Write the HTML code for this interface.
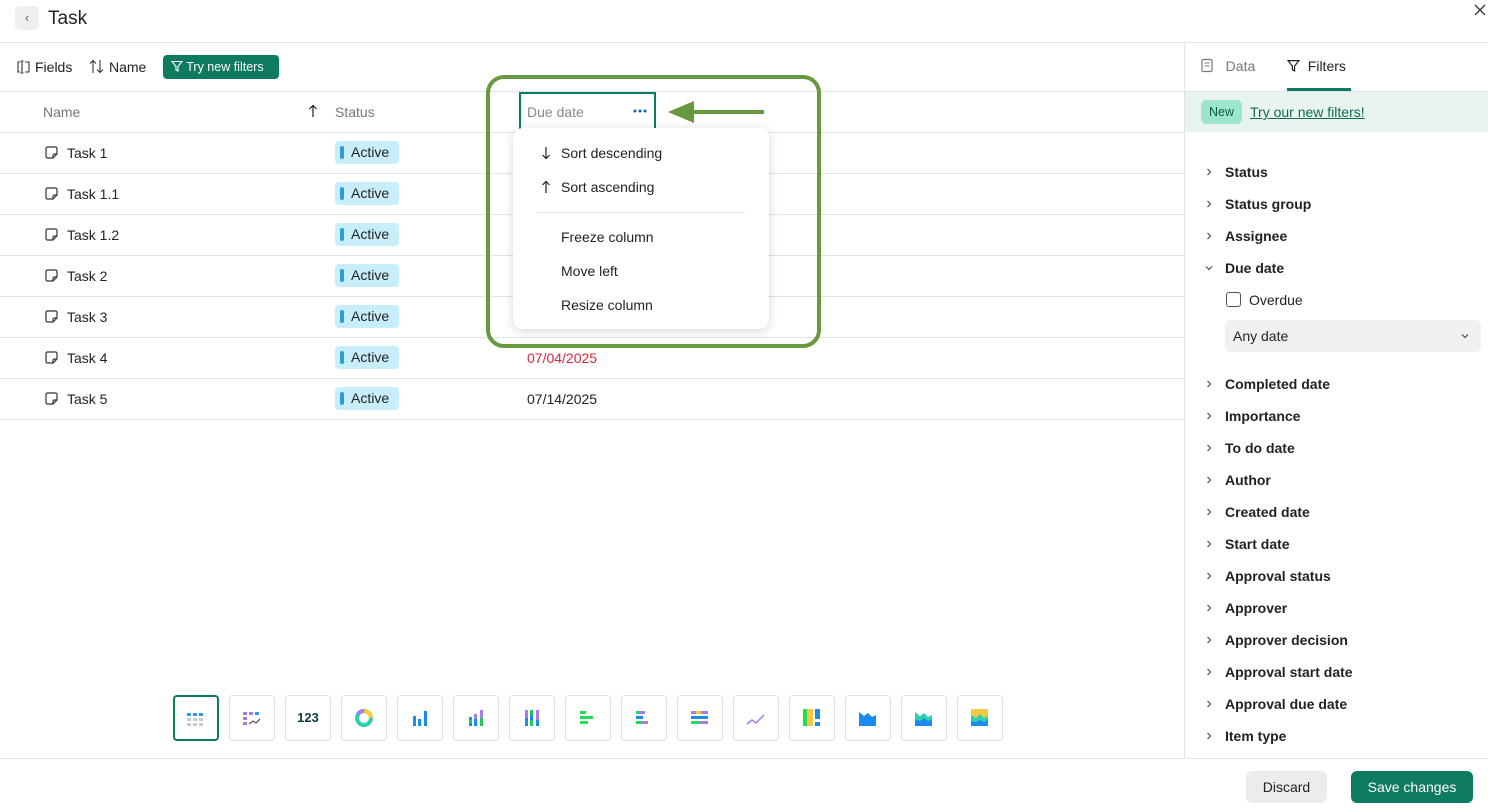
<!DOCTYPE html>
<html><head><style>
*{box-sizing:border-box;margin:0;padding:0}
body{width:1488px;height:808px;position:relative;overflow:hidden;background:#fff;font-family:"Liberation Sans",sans-serif;color:#222;font-size:14px}
.a{position:absolute}
.hl{position:absolute;height:1px;background:#e3e3e3}
.badge{position:absolute;left:335px;width:64px;height:23px;background:#c8eefb;border-radius:4px;font-size:14px;line-height:23px;padding-left:16px}
.badge:before{content:"";position:absolute;left:5px;top:5px;width:4px;height:13px;border-radius:2px;background:#2e9bd9}
.tk{position:absolute;left:67px;font-size:14px}
.ti{position:absolute;left:45px}
.fi{position:absolute;left:1225px;font-weight:bold;font-size:14px}
.ch{position:absolute;left:1205px}
.cb{position:absolute;top:695px;width:46px;height:46px;border:1px solid #ddd;border-radius:4px;background:#fff}
.mi{position:absolute;left:561px;font-size:14px}
</style></head><body>
<svg width="0" height="0" style="position:absolute"><defs>
<symbol id="note" viewBox="0 0 13 13"><path d="M2.5 1h8a1.5 1.5 0 0 1 1.5 1.5V8l-4 4H2.5A1.5 1.5 0 0 1 1 10.5v-8A1.5 1.5 0 0 1 2.5 1z M12 8H9.5A1.5 1.5 0 0 0 8 9.5V12" fill="none" stroke="#333" stroke-width="1.2"/></symbol>
<symbol id="chev" viewBox="0 0 8 8"><path d="M2.5 1l3 3-3 3" fill="none" stroke="#444" stroke-width="1.1"/></symbol>
<symbol id="up" viewBox="0 0 10 14"><path d="M5 13V1.5M1.5 5L5 1.5 8.5 5" fill="none" stroke="#222" stroke-width="1.2"/></symbol>
</defs></svg>
<!-- header -->
<div class="a" style="left:15px;top:6px;width:24px;height:24px;background:#efefef;border-radius:5px;text-align:center;line-height:23px;color:#666;font-size:13px">‹</div>
<div class="a" style="left:48px;top:8px;font-size:19px">Task</div>
<svg class="a" style="left:1474px;top:4px" width="12" height="12"><path d="M1 1l10 10M11 1L1 11" stroke="#333" stroke-width="1.3"/></svg>
<div class="hl" style="left:0;top:42px;width:1488px"></div>
<!-- toolbar -->
<svg class="a" style="left:16px;top:60px" width="16" height="14"><path d="M4 2H2v10h2M9 2h4v10H9M6 1v12M4.5 1h3M4.5 13h3" fill="none" stroke="#333" stroke-width="1.1"/></svg>
<div class="a" style="left:35px;top:59px">Fields</div>
<svg class="a" style="left:89px;top:59px" width="16" height="15"><path d="M4 14V1.5M1 4.5L4 1.5 7 4.5M11 1v12.5M8 10.5l3 3 3-3" fill="none" stroke="#333" stroke-width="1.1"/></svg>
<div class="a" style="left:109px;top:59px">Name</div>
<div class="a" style="left:163px;top:55px;width:116px;height:24px;background:#0e7a5f;border-radius:4px;color:#fff;font-size:12.5px;line-height:24px;padding-left:8px"><svg width="12" height="12" viewBox="0 0 12 12" style="vertical-align:-1px"><path d="M1 1.5h10L7 6.5V11L5 10V6.5z" fill="none" stroke="#fff" stroke-width="1.1"/></svg> Try new filters</div>
<div class="hl" style="left:0;top:91px;width:1184px"></div>
<!-- table header -->
<div class="a" style="left:43px;top:104px;color:#777">Name</div>
<svg class="a" style="left:308px;top:104px" width="10" height="14"><use href="#up"/></svg>
<div class="a" style="left:335px;top:104px;color:#777">Status</div>
<div class="a" style="left:519px;top:92px;width:137px;height:40px;border:2px solid #0e7a5f;border-bottom:none"></div>
<div class="a" style="left:527px;top:104px;color:#888">Due date</div>
<svg class="a" style="left:633px;top:109px" width="15" height="4"><circle cx="2" cy="2" r="1.5" fill="#1060c0"/><circle cx="7" cy="2" r="1.5" fill="#1060c0"/><circle cx="12" cy="2" r="1.5" fill="#1060c0"/></svg>
<div class="hl" style="left:0;top:132px;width:1184px"></div>
<div class="hl" style="left:0;top:173px;width:1184px"></div>
<div class="hl" style="left:0;top:214px;width:1184px"></div>
<div class="hl" style="left:0;top:255px;width:1184px"></div>
<div class="hl" style="left:0;top:296px;width:1184px"></div>
<div class="hl" style="left:0;top:337px;width:1184px"></div>
<div class="hl" style="left:0;top:378px;width:1184px"></div>
<div class="hl" style="left:0;top:419px;width:1184px"></div>
<svg class="ti" style="top:146px" width="13" height="13"><use href="#note"/></svg><div class="tk" style="top:145px">Task 1</div><div class="badge" style="top:141px">Active</div>
<svg class="ti" style="top:187px" width="13" height="13"><use href="#note"/></svg><div class="tk" style="top:186px">Task 1.1</div><div class="badge" style="top:182px">Active</div>
<svg class="ti" style="top:228px" width="13" height="13"><use href="#note"/></svg><div class="tk" style="top:227px">Task 1.2</div><div class="badge" style="top:223px">Active</div>
<svg class="ti" style="top:269px" width="13" height="13"><use href="#note"/></svg><div class="tk" style="top:268px">Task 2</div><div class="badge" style="top:264px">Active</div>
<svg class="ti" style="top:310px" width="13" height="13"><use href="#note"/></svg><div class="tk" style="top:309px">Task 3</div><div class="badge" style="top:305px">Active</div>
<svg class="ti" style="top:351px" width="13" height="13"><use href="#note"/></svg><div class="tk" style="top:350px">Task 4</div><div class="badge" style="top:346px">Active</div>
<svg class="ti" style="top:392px" width="13" height="13"><use href="#note"/></svg><div class="tk" style="top:391px">Task 5</div><div class="badge" style="top:387px">Active</div>
<div class="a" style="left:527px;top:350px;color:#d42a3a">07/04/2025</div>
<div class="a" style="left:527px;top:391px">07/14/2025</div>
<!-- menu -->
<div class="a" style="left:513px;top:128px;width:256px;height:201px;background:#fff;border-radius:10px;box-shadow:0 2px 10px rgba(0,0,0,.16)"></div>
<svg class="a" style="left:541px;top:146px;transform:rotate(180deg)" width="10" height="14"><use href="#up"/></svg><div class="mi" style="top:145px">Sort descending</div>
<svg class="a" style="left:541px;top:180px" width="10" height="14"><use href="#up"/></svg><div class="mi" style="top:179px">Sort ascending</div>
<div class="hl" style="left:537px;top:212px;width:208px"></div>
<div class="mi" style="top:229px">Freeze column</div>
<div class="mi" style="top:263px">Move left</div>
<div class="mi" style="top:297px">Resize column</div>
<!-- annotation -->
<div class="a" style="left:486px;top:75px;width:335px;height:273px;border:4px solid #69993e;border-radius:18px"></div>
<svg class="a" style="left:666px;top:98px" width="100" height="28"><path d="M98 14H28" stroke="#69993e" stroke-width="4"/><path d="M2 14L28 3V25z" fill="#69993e"/></svg>
<!-- chart buttons -->
<div class="cb" style="left:173px;border:2px solid #0e7a5f"><svg width="42" height="42"><g fill="#2e9bf0"><rect x="12" y="16" width="4" height="3"/><rect x="18" y="16" width="4" height="3"/><rect x="24" y="16" width="4" height="3"/></g><g fill="#ccc"><rect x="12" y="21" width="4" height="3"/><rect x="18" y="21" width="4" height="3"/><rect x="24" y="21" width="4" height="3"/><rect x="12" y="26" width="4" height="3"/><rect x="18" y="26" width="4" height="3"/><rect x="24" y="26" width="4" height="3"/></g></svg></div>
<div class="cb" style="left:229px"><svg width="44" height="44"><g fill="#a77bea"><rect x="13" y="16" width="4" height="3"/><rect x="19" y="16" width="4" height="3"/><rect x="13" y="21" width="4" height="3"/><rect x="13" y="26" width="4" height="3"/></g><g fill="#2e9bf0"><rect x="25" y="16" width="4" height="3"/></g><path d="M19 28l4-3 3 2 4-4" stroke="#333" fill="none"/></svg></div>
<div class="cb" style="left:285px;text-align:center;line-height:44px;font-weight:bold;font-size:13px;color:#0d3b44">123</div>
<div class="cb" style="left:341px"><svg width="44" height="44"><circle cx="22" cy="22" r="7" fill="none" stroke="#2ed0b0" stroke-width="4"/><path d="M22 15a7 7 0 0 1 7 7" stroke="#f5c842" stroke-width="4" fill="none"/><path d="M22 15a7 7 0 0 0-6 3" stroke="#a77bea" stroke-width="4" fill="none"/></svg></div>
<div class="cb" style="left:397px"><svg width="44" height="44" fill="#1a8cf0"><rect x="15" y="20" width="3" height="10"/><rect x="20" y="23" width="3" height="7"/><rect x="26" y="15" width="3" height="15"/></svg></div>
<div class="cb" style="left:453px"><svg width="44" height="44"><rect x="15" y="21" width="3" height="9" fill="#1a8cf0"/><rect x="15" y="24" width="3" height="3" fill="#22c55e"/><rect x="20" y="18" width="3" height="12" fill="#a77bea"/><rect x="20" y="23" width="3" height="7" fill="#1a8cf0"/><rect x="26" y="14" width="3" height="16" fill="#a77bea"/><rect x="26" y="22" width="3" height="8" fill="#22c55e"/></svg></div>
<div class="cb" style="left:509px"><svg width="44" height="44"><rect x="15" y="14" width="3" height="16" fill="#a77bea"/><rect x="15" y="22" width="3" height="8" fill="#1a8cf0"/><rect x="20" y="14" width="3" height="16" fill="#22c55e"/><rect x="20" y="19" width="3" height="5" fill="#1a8cf0"/><rect x="26" y="14" width="3" height="16" fill="#a77bea"/><rect x="26" y="24" width="3" height="6" fill="#1a8cf0"/></svg></div>
<div class="cb" style="left:565px"><svg width="44" height="44" fill="#22dd55"><rect x="14" y="15" width="6" height="3"/><rect x="14" y="20" width="13" height="3"/><rect x="14" y="25" width="8" height="3"/></svg></div>
<div class="cb" style="left:621px"><svg width="44" height="44"><rect x="14" y="15" width="9" height="3" fill="#a77bea"/><rect x="14" y="15" width="4" height="3" fill="#22dd55"/><rect x="14" y="20" width="7" height="3" fill="#1a8cf0"/><rect x="14" y="25" width="12" height="3" fill="#a77bea"/><rect x="14" y="25" width="6" height="3" fill="#22dd55"/></svg></div>
<div class="cb" style="left:677px"><svg width="44" height="44"><rect x="13" y="15" width="17" height="3" fill="#a77bea"/><rect x="18" y="15" width="5" height="3" fill="#f5c842"/><rect x="13" y="20" width="17" height="3" fill="#1a8cf0"/><rect x="13" y="25" width="17" height="3" fill="#22dd55"/><rect x="22" y="25" width="8" height="3" fill="#a77bea"/></svg></div>
<div class="cb" style="left:733px"><svg width="44" height="44"><path d="M13 28l5-4 4 3 8-8" stroke="#a77bea" stroke-width="1.5" fill="none"/></svg></div>
<div class="cb" style="left:789px"><svg width="44" height="44"><rect x="13" y="13" width="4" height="17" fill="#22dd55"/><rect x="17" y="13" width="6" height="17" fill="#f5c842"/><rect x="25" y="13" width="5" height="10" fill="#1a8cf0"/><rect x="25" y="26" width="5" height="4" fill="#1a8cf0"/></svg></div>
<div class="cb" style="left:845px"><svg width="44" height="44"><path d="M13 30V16l5 4 4-3 4 4 4-2v11z" fill="#1a8cf0"/></svg></div>
<div class="cb" style="left:901px"><svg width="44" height="44"><path d="M13 30V16l5 4 4-3 4 4 4-2v11z" fill="#2ed0b0"/><path d="M13 30V23l5 2 4-3 4 3 4-2v7z" fill="#1a8cf0"/></svg></div>
<div class="cb" style="left:957px"><svg width="44" height="44"><rect x="13" y="13" width="17" height="17" fill="#f5c842"/><path d="M13 30V19l5 3 4-4 4 4 4-2v10z" fill="#2ed0b0"/><path d="M13 30V25l5 1 4-2 4 2 4-2v6z" fill="#1a8cf0"/></svg></div>
<!-- right panel -->
<div class="a" style="left:1184px;top:42px;width:1px;height:716px;background:#e3e3e3"></div>
<div class="a" style="left:1200px;top:58px;color:#777;font-size:14px"><svg width="14" height="15" viewBox="0 0 14 15" style="vertical-align:-2px"><rect x="2" y="1.5" width="10" height="12" rx="1.5" fill="none" stroke="#777" stroke-width="1.2"/><path d="M4.5 5h5M4.5 8h5" stroke="#777"/></svg>&nbsp;&nbsp;&nbsp;Data</div>
<div class="a" style="left:1287px;top:58px;font-size:14px"><svg width="13" height="13" viewBox="0 0 12 12" style="vertical-align:-1px"><path d="M1 1.5h10L7 6.5V11L5 10V6.5z" fill="none" stroke="#222" stroke-width="1.1"/></svg>&nbsp;&nbsp;Filters</div>
<div class="a" style="left:1287px;top:88px;width:64px;height:3px;background:#0e7a5f"></div>
<div class="hl" style="left:1185px;top:91px;width:303px"></div>
<div class="a" style="left:1185px;top:92px;width:303px;height:40px;background:#e9f3f0"></div>
<div class="a" style="left:1201px;top:100px;width:41px;height:24px;background:#9ee5cd;border-radius:5px;font-size:12.5px;line-height:24px;text-align:center;color:#0b5a46">New</div>
<div class="a" style="left:1250px;top:104px;color:#0e6a52;text-decoration:underline">Try our new filters!</div>
<svg class="ch" style="top:168px" width="8" height="8"><use href="#chev"/></svg><div class="fi" style="top:164px">Status</div>
<svg class="ch" style="top:200px" width="8" height="8"><use href="#chev"/></svg><div class="fi" style="top:196px">Status group</div>
<svg class="ch" style="top:232px" width="8" height="8"><use href="#chev"/></svg><div class="fi" style="top:228px">Assignee</div>
<svg class="ch" style="top:264px;transform:rotate(90deg)" width="8" height="8"><use href="#chev"/></svg><div class="fi" style="top:260px">Due date</div>
<div class="a" style="left:1226px;top:292px;width:15px;height:15px;border:1.3px solid #555;border-radius:3px"></div>
<div class="a" style="left:1249px;top:292px">Overdue</div>
<div class="a" style="left:1225px;top:320px;width:256px;height:32px;background:#f0f0f0;border-radius:6px;padding-left:8px;line-height:32px">Any date<svg style="position:absolute;right:12px;top:12px;transform:rotate(90deg)" width="8" height="8"><use href="#chev"/></svg></div>
<svg class="ch" style="top:380px" width="8" height="8"><use href="#chev"/></svg><div class="fi" style="top:376px">Completed date</div>
<svg class="ch" style="top:412px" width="8" height="8"><use href="#chev"/></svg><div class="fi" style="top:408px">Importance</div>
<svg class="ch" style="top:444px" width="8" height="8"><use href="#chev"/></svg><div class="fi" style="top:440px">To do date</div>
<svg class="ch" style="top:476px" width="8" height="8"><use href="#chev"/></svg><div class="fi" style="top:472px">Author</div>
<svg class="ch" style="top:508px" width="8" height="8"><use href="#chev"/></svg><div class="fi" style="top:504px">Created date</div>
<svg class="ch" style="top:540px" width="8" height="8"><use href="#chev"/></svg><div class="fi" style="top:536px">Start date</div>
<svg class="ch" style="top:572px" width="8" height="8"><use href="#chev"/></svg><div class="fi" style="top:568px">Approval status</div>
<svg class="ch" style="top:604px" width="8" height="8"><use href="#chev"/></svg><div class="fi" style="top:600px">Approver</div>
<svg class="ch" style="top:636px" width="8" height="8"><use href="#chev"/></svg><div class="fi" style="top:632px">Approver decision</div>
<svg class="ch" style="top:668px" width="8" height="8"><use href="#chev"/></svg><div class="fi" style="top:664px">Approval start date</div>
<svg class="ch" style="top:700px" width="8" height="8"><use href="#chev"/></svg><div class="fi" style="top:696px">Approval due date</div>
<svg class="ch" style="top:732px" width="8" height="8"><use href="#chev"/></svg><div class="fi" style="top:728px">Item type</div>
<!-- footer -->
<div class="hl" style="left:0;top:758px;width:1488px"></div>
<div class="a" style="left:1246px;top:771px;width:81px;height:32px;background:#ececec;border-radius:6px;text-align:center;line-height:32px">Discard</div>
<div class="a" style="left:1351px;top:771px;width:122px;height:32px;background:#0e7a5f;border-radius:6px;text-align:center;line-height:32px;color:#fff">Save changes</div>
</body></html>
